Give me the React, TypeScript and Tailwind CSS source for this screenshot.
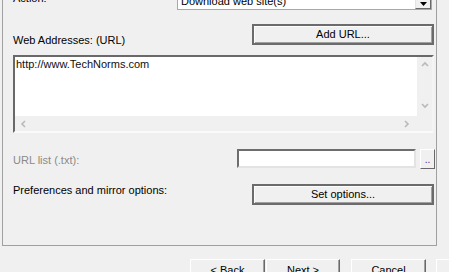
import React from "react";

const Chevron = ({ dir }: { dir: "up" | "down" | "left" | "right" }) => {
  const pts: Record<string, string> = {
    up: "1,5 4,2 7,5",
    down: "1,2 4,5 7,2",
    left: "5,1 2,4 5,7",
    right: "3,1 6,4 3,7",
  };
  return (
    <svg width="8" height="8" viewBox="0 0 8 8" className="block">
      <polyline points={pts[dir]} fill="none" stroke="#b9b9b9" strokeWidth="1.6" />
    </svg>
  );
};

const DefaultBtn = ({ label }: { label: string }) => (
  <div className="flex h-[21px] w-[182px] items-center justify-center border-2 border-[#6b6b6b] bg-[#f0f0f0] shadow-[inset_1px_1px_0_#fcfcfc,inset_-1px_-1px_0_#a0a0a0] text-black">
    {label}
  </div>
);

const NavBtn = ({ label, w }: { label: string; w: string }) => (
  <div
    className={`flex h-[23px] ${w} shrink-0 items-center justify-center border border-t-white border-l-white border-r-[#696969] border-b-[#696969] bg-[#f0f0f0] shadow-[inset_-1px_-1px_0_#a0a0a0] text-black`}
  >
    {label}
  </div>
);

export default function App() {
  return (
    <div
      className="h-[272px] w-[449px] overflow-hidden bg-[#f0f0f0] text-[11px] leading-[13px] text-black"
      style={{ fontFamily: '"Liberation Sans", Arial, sans-serif' }}
    >
      {/* panel */}
      <div className="ml-[2px] h-[246px] w-[435px] overflow-hidden border-b border-l border-r border-[#a0a0a0]">
        <div className="mt-[-11px] flex flex-col pl-[10px]">
          {/* Action row */}
          <div className="flex h-[21px] items-start">
            <div className="mt-[3px] w-[164px]">Action:</div>
            <div className="flex h-[21px] w-[255px] border border-[#a8a8a8] bg-white">
              <div className="flex-1 pl-[3px]">
                <div className="mt-[5px]">Download web site(s)</div>
              </div>
              <div className="flex w-[16px] justify-center border border-t-white border-l-[#e3e3e3] border-r-[#696969] border-b-[#696969] bg-[#f0f0f0]">
                <svg width="7" height="4" viewBox="0 0 7 4" className="mt-[11px] block">
                  <polygon points="0,0 7,0 3.5,4" fill="#000" />
                </svg>
              </div>
            </div>
          </div>

          {/* Web addresses row */}
          <div className="mt-[14px] flex h-[21px] items-start">
            <div className="mt-[10px] w-[239px]">Web Addresses: (URL)</div>
            <DefaultBtn label="Add URL..." />
          </div>

          {/* textarea */}
          <div className="mt-[10px] flex h-[78px] w-[421px] flex-col border-2 border-t-[#696969] border-l-[#696969] border-r-[#f4f4f4] border-b-[#fafafa] bg-white">
            <div className="flex h-[59px]">
              <div className="flex-1 pl-[1px] pt-[1px] text-[#101010]">http://www.TechNorms.com</div>
              <div className="flex w-[15px] flex-col items-center justify-between bg-[#f0f0f0] pb-[6px] pt-[4px]">
                <Chevron dir="up" />
                <Chevron dir="down" />
              </div>
            </div>
            <div className="flex h-[15px] items-center bg-[#f0f0f0]">
              <div className="flex flex-1 items-center justify-between pl-[5px] pr-[7px]">
                <Chevron dir="left" />
                <Chevron dir="right" />
              </div>
              <div className="w-[15px]" />
            </div>
          </div>

          {/* URL list row */}
          <div className="mt-[16px] flex h-[20px] items-start">
            <div className="mt-[5px] w-[224px] text-[#8a8a8a]">URL list (.txt):</div>
            <div className="h-[19px] w-[179px] border-2 border-t-[#6d6d6d] border-l-[#6d6d6d] border-r-[#e3e3e3] border-b-[#e3e3e3] bg-white" />
            <div className="ml-[4px] flex h-[20px] w-[15px] items-end justify-center border border-t-white border-l-white border-r-[#696969] border-b-[#696969] bg-[#f0f0f0] pb-[4px] text-[10px] leading-[8px] text-[#3b2a8a]">
              ..
            </div>
          </div>

          {/* Preferences row */}
          <div className="mt-[15px] flex h-[21px] items-start">
            <div className="w-[239px]">Preferences and mirror options:</div>
            <DefaultBtn label="Set options..." />
          </div>
        </div>
      </div>

      {/* bottom buttons */}
      <div className="mt-[13px] flex pl-[190px]">
        <NavBtn label="< Back" w="w-[75px]" />
        <div className="ml-[1px]">
          <NavBtn label="Next >" w="w-[74px]" />
        </div>
        <div className="ml-[11px]">
          <NavBtn label="Cancel" w="w-[75px]" />
        </div>
        <div className="ml-[10px]">
          <NavBtn label="Help" w="w-[75px]" />
        </div>
      </div>
    </div>
  );
}
